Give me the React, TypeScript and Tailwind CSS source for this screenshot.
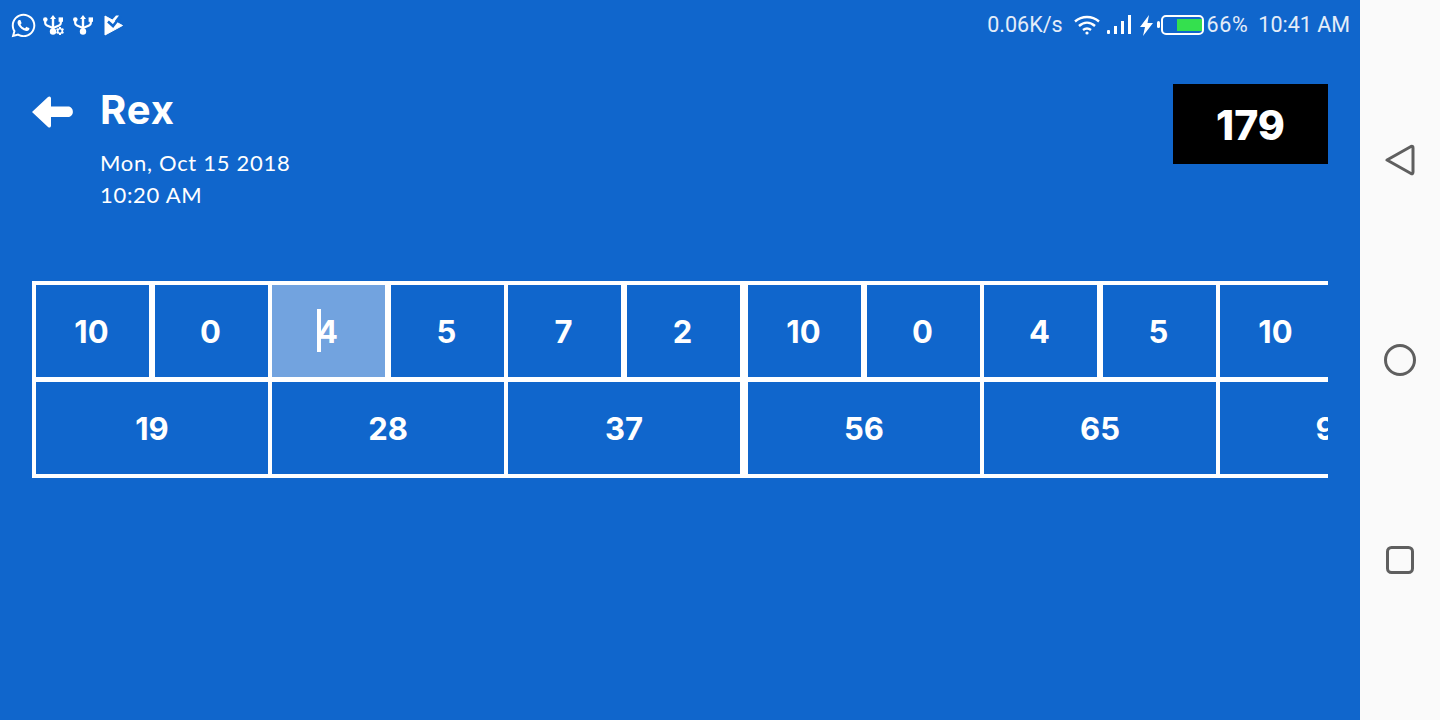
import { FaWhatsapp } from "react-icons/fa";
import { MdSettings } from "react-icons/md";

const textFont = "font-['Lato','Liberation_Sans',sans-serif]";
const numFont = "font-['Inter','Liberation_Sans',sans-serif]";

type Frame = { rolls: [string, string]; total: string; active?: boolean };

const sets: Frame[][] = [
  [
    { rolls: ["10", "0"], total: "19" },
    { rolls: ["4", "5"], total: "28", active: true },
    { rolls: ["7", "2"], total: "37" },
  ],
  [
    { rolls: ["10", "0"], total: "56" },
    { rolls: ["4", "5"], total: "65" },
    { rolls: ["10", ""], total: "94" },
  ],
];

function UsbIcon({ className }: { className?: string }) {
  return (
    <svg width="20" height="20" viewBox="0 0 20 20" className={className} fill="#fff">
      <path d="M10 0 L13 4 L11.2 4 L11.2 15 L8.8 15 L8.8 4 L7 4 Z" />
      <circle cx="10" cy="16.5" r="3.2" />
      <path d="M10 13 L4 10.5 C2.8 10 2.2 9 2.2 8 L2.2 5" fill="none" stroke="#fff" strokeWidth="2.2" />
      <circle cx="2.3" cy="4.5" r="2.3" />
      <path d="M10 13 L16 10.5 C17.2 10 17.8 9 17.8 8 L17.8 5" fill="none" stroke="#fff" strokeWidth="2.2" />
      <rect x="15.6" y="2.4" width="4.4" height="4.4" />
    </svg>
  );
}

function StatusBar() {
  return (
    <div className="flex h-[50px] items-center justify-between pl-[10px] pr-[10px] font-['Roboto',sans-serif] text-[21.5px] text-[#e4edf9]">
      <div className="flex items-center text-white">
        <FaWhatsapp size={27} />
        <div className="relative ml-[6px] h-5 w-[21px]">
          <UsbIcon />
          <MdSettings size={10} className="absolute bottom-[-1px] right-[-1px]" />
        </div>
        <UsbIcon className="ml-[9px]" />
        <svg width="20" height="21" viewBox="0 0 20 21" className="ml-[11px]">
          <path d="M1 1 L18.5 10.5 L1 20 Z" fill="#fff" stroke="#fff" strokeLinejoin="round" />
          <path d="M4 6.5 L9 11 L16.5 1.5" fill="none" stroke="#1066cc" strokeWidth="2.6" />
          <path d="M12 0.5 L15 0.5 L10 7 L8 5 Z" fill="#fff" />
        </svg>
      </div>
      <div className="flex items-center">
        <span>0.06K/s</span>
        <svg width="26" height="20" viewBox="0 0 26 20" className="ml-[11px] text-white" fill="none" stroke="currentColor" strokeWidth="2.4">
          <path d="M1 6.5 C8 0.5 18 0.5 25 6.5" />
          <path d="M5 11 C10 6.5 16 6.5 21 11" />
          <path d="M9 15 C11.5 13 14.5 13 17 15" />
          <circle cx="13" cy="18" r="1.6" fill="currentColor" stroke="none" />
        </svg>
        <svg width="24" height="20" viewBox="0 0 24 20" className="ml-[7px]" fill="#fff">
          <rect x="0" y="15" width="3" height="4" rx="1" />
          <rect x="7" y="11" width="3" height="8" />
          <rect x="14" y="6" width="3" height="13" />
          <rect x="21" y="0" width="3" height="19" />
        </svg>
        <svg width="13" height="21" viewBox="0 0 13 21" className="ml-[9px]" fill="#fff">
          <path d="M9 0 L0 12 L5 12 L3 21 L13 8 L7.5 8 Z" />
        </svg>
        <svg width="47" height="20" viewBox="0 0 47 20" className="ml-[4px]">
          <rect x="0" y="6" width="3" height="7" rx="1.5" fill="#fff" />
          <rect x="5" y="1" width="41" height="18" rx="4" fill="none" stroke="#fff" strokeWidth="2" />
          <rect x="20" y="4" width="25" height="12" fill="#34e04e" />
        </svg>
        <span className="ml-[3px] tracking-[0.6px]">66%</span>
        <span className="ml-[10px]">10:41 AM</span>
      </div>
    </div>
  );
}

function Header() {
  return (
    <div className="mt-[34px] flex items-start justify-between">
      <div className="flex">
        <svg width="41" height="32" viewBox="0 0 41 32" className="mt-[12px]" fill="#fff">
          <path d="M0 16 L16 1 C17.5 -0.2 19 0.6 19 2.5 L19 10.5 L36 10.5 C42.5 10.5 42.5 21 36 21 L19 21 L19 29.5 C19 31.4 17.5 32.2 16 31 Z" />
        </svg>
        <div className="ml-[27px]">
          <h1 className={`text-[40px] font-bold leading-[52px] tracking-[1px] text-white ${numFont}`}>Rex</h1>
          <p className={`mt-[11px] text-[22px] leading-[32px] tracking-[0.7px] text-white ${textFont}`}>Mon, Oct 15 2018</p>
          <p className={`text-[22px] leading-[32px] tracking-[0.7px] text-white ${textFont}`}>10:20 AM</p>
        </div>
      </div>
      <div className={`flex h-20 w-[155px] items-center justify-center bg-black pt-[4px] text-[41px] font-extrabold text-white ${numFont}`}>
        179
      </div>
    </div>
  );
}

function Cell({ value, active }: { value: string; active?: boolean }) {
  return (
    <div className={`relative flex h-[92px] w-[113px] items-center justify-center pr-[2px] pt-[2px] ${active ? "bg-[#72a3df]" : "bg-[#1066cc]"}`}>
      {value}
      {active && <span className="absolute left-[45px] top-[24px] h-[43px] w-1 bg-white" />}
    </div>
  );
}

function ScoreTable() {
  return (
    <div className={`mt-[70px] flex w-[1296px] overflow-hidden text-[31px] font-bold text-white ${numFont}`}>
      {sets.map((frames, i) => (
        <div key={i} className="flex shrink-0 border-y-4 border-l-4 border-white bg-white">
          {frames.map((frame, j) => (
            <div key={j} className="flex w-[236px] shrink-0 flex-col gap-[5px] border-r-4 border-white">
              <div className="flex justify-between gap-[6px]">
                <Cell value={frame.rolls[0]} active={frame.active} />
                <Cell value={frame.rolls[1]} />
              </div>
              <div className="flex h-[92px] items-center justify-center bg-[#1066cc] pt-[2px]">{frame.total}</div>
            </div>
          ))}
        </div>
      ))}
    </div>
  );
}

function NavBar() {
  return (
    <div className="flex h-full w-20 flex-col items-center justify-between bg-[#fafafa] py-[144px] text-[#5f5f5f]">
      <svg width="30" height="32" viewBox="0 0 30 32" fill="none" stroke="currentColor" strokeWidth="3" strokeLinejoin="round">
        <path d="M2 16 L26 2.5 C27.5 2 28 2.5 28 4 L28 28 C28 29.5 27.5 30 26 29.5 Z" />
      </svg>
      <svg width="32" height="32" viewBox="0 0 32 32" fill="none" stroke="currentColor" strokeWidth="3">
        <circle cx="16" cy="16" r="14.5" />
      </svg>
      <svg width="32" height="32" viewBox="0 0 32 32" fill="none" stroke="currentColor" strokeWidth="3">
        <rect x="3.5" y="3.5" width="25" height="25" rx="4" />
      </svg>
    </div>
  );
}

export default function App() {
  return (
    <div className="flex h-[720px] w-[1440px] overflow-hidden bg-[#1066cc]">
      <div className="w-[1360px] shrink-0">
        <StatusBar />
        <div className="px-8">
          <Header />
          <ScoreTable />
        </div>
      </div>
      <NavBar />
    </div>
  );
}
